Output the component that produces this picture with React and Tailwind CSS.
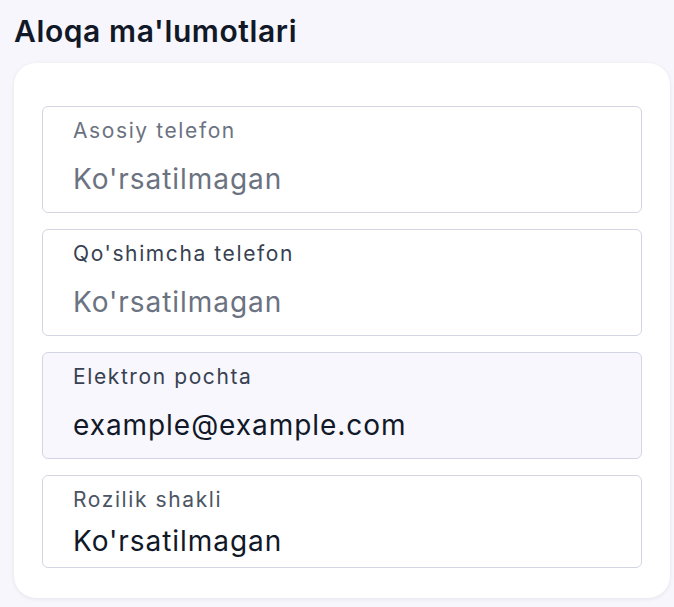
import React from 'react';

const fields = [
  { label: "Asosiy telefon", value: "Ko'rsatilmagan", labelColor: 'text-[#6b7280]', valueColor: 'text-[#6b7280]', bg: 'bg-white' },
  { label: "Qo'shimcha telefon", value: "Ko'rsatilmagan", labelColor: 'text-[#374151]', valueColor: 'text-[#6b7280]', bg: 'bg-white' },
  { label: 'Elektron pochta', value: 'example@example.com', labelColor: 'text-[#374151]', valueColor: 'text-[#111827]', bg: 'bg-[#f8f7fd]' },
];

const App = () => {
  return (
    <div className="min-h-[607px] bg-[#f7f6fc] pl-[14px] pr-[4px] pt-[14px] pb-[9px]" style={{ fontFamily: 'Inter, "Noto Sans", sans-serif' }}>
      <h1 className="text-[30px] leading-[34px] font-semibold tracking-[0.6px] text-[#111827]">Aloqa ma'lumotlari</h1>
      <div className="mt-[15px] rounded-[22px] bg-white px-[28px] pt-[43px] pb-[30px] shadow-[0_1px_4px_rgba(0,0,0,0.08)]">
        <div className="flex flex-col gap-[16px]">
          {fields.map((f) => (
            <div key={f.label} className={`h-[107px] rounded-[6px] border-[1.5px] border-[#d3d5e3] ${f.bg} px-[30px] pt-[12px]`}>
              <div className={`text-[21px] leading-[24px] tracking-[1.6px] ${f.labelColor}`}>{f.label}</div>
              <div className={`mt-[19px] text-[28px] leading-[34px] tracking-[0.95px] ${f.valueColor}`}>{f.value}</div>
            </div>
          ))}
          <div className="h-[93px] rounded-[6px] border-[1.5px] border-[#d3d5e3] bg-white px-[30px] pt-[12px]">
            <div className="text-[21px] leading-[24px] tracking-[1.6px] text-[#4b5563]">Rozilik shakli</div>
            <div className="mt-[12px] text-[28px] leading-[34px] tracking-[0.95px] text-[#111827]">Ko'rsatilmagan</div>
          </div>
        </div>
      </div>
    </div>
  );
};

export default App;
